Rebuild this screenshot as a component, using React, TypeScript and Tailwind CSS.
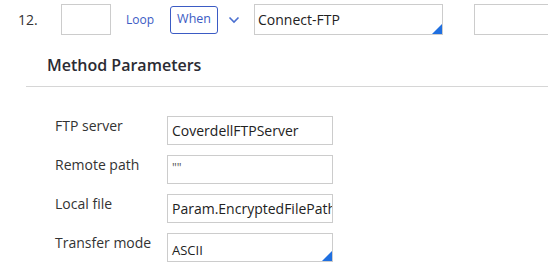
const rows = [
  { label: 'FTP server', value: 'CoverdellFTPServer', kind: 'text' },
  { label: 'Remote path', value: '""', kind: 'small' },
  { label: 'Local file', value: 'Param.EncryptedFilePath', kind: 'text' },
  { label: 'Transfer mode', value: 'ASCII', kind: 'select' },
];

function Corner() {
  return (
    <svg className="absolute bottom-0 right-0" width="10" height="10" viewBox="0 0 10 10">
      <polygon points="10,0 10,10 0,10" fill="#1f6fe0" />
    </svg>
  );
}

export default function App() {
  return (
    <div className="h-[277px] w-[548px] overflow-hidden bg-white font-['Open_Sans',sans-serif] text-[#333]">
      <div className="flex h-[38px] items-center pt-[1px]">
        <span className="ml-[18px] w-[43px] shrink-0 text-[14px]">12.</span>
        <div className="h-[31px] w-[50px] shrink-0 border border-[#ccc]" />
        <span className="ml-[15px] shrink-0 text-[12px] text-[#3b5bc4]">Loop</span>
        <button className="ml-[16px] h-[28px] w-[48px] shrink-0 rounded-[3px] border border-[#3b5bc4] text-[12.5px] text-[#3b5bc4]">
          When
        </button>
        <svg className="ml-[10px] shrink-0" width="12" height="8" viewBox="0 0 12 8">
          <polyline points="1.5,1.5 6,6 10.5,1.5" fill="none" stroke="#4a6fd0" strokeWidth="1.6" />
        </svg>
        <div className="relative ml-[14px] flex h-[31px] w-[189px] shrink-0 items-center border border-[#ccc] px-[3px] text-[14px] text-[#222]">
          Connect-FTP
          <Corner />
        </div>
        <div className="ml-[31px] h-[31px] w-[100px] shrink-0 border border-[#ccc]" />
      </div>

      <div className="pl-[47px] pt-[15px] text-[16px] font-semibold leading-[24px] text-[#2b2b33]">Method Parameters</div>
      <div className="ml-[26px] mt-[9px] border-t border-[#d6d6d6]" />

      <div className="flex flex-col gap-[10px] pl-[55px] pt-[29px]">
        {rows.map((r) => (
          <div key={r.label} className="flex items-start">
            <span className="w-[112px] shrink-0 pt-[1px] text-[14px] leading-[18px]">{r.label}</span>
            <div
              className={
                'relative h-[29px] w-[166px] shrink-0 overflow-hidden whitespace-nowrap border border-[#ccc] px-[4px] ' +
                (r.kind === 'small'
                  ? 'pt-[4px] text-[12px] leading-[16px] text-[#555]'
                  : r.kind === 'select'
                    ? 'pt-[7px] text-[13px] text-[#222]'
                    : 'flex items-center text-[14px] text-[#222]')
              }
            >
              {r.value}
              {r.kind === 'select' && <Corner />}
            </div>
          </div>
        ))}
      </div>
    </div>
  );
}
